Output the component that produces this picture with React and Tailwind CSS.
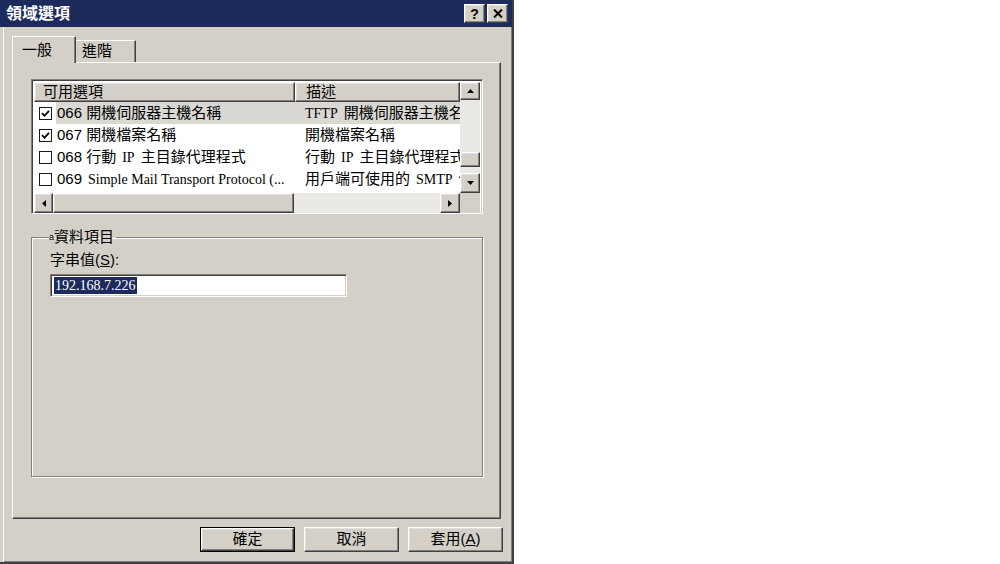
import React from "react";

const raised =
  "bg-[#d4d0c8] border border-t-white border-l-white border-r-[#404040] border-b-[#404040] shadow-[inset_-1px_-1px_0_#808080,inset_1px_1px_0_#dfdfdf]";

function Tri({ dir }) {
  const pts = {
    up: "0,4 7,4 3.5,0",
    down: "0,0 7,0 3.5,4",
    left: "4,0 4,7 0,3.5",
    right: "0,0 0,7 4,3.5",
  }[dir];
  const w = dir === "up" || dir === "down" ? 7 : 4;
  const h = dir === "up" || dir === "down" ? 4 : 7;
  return (
    <svg width={w} height={h} viewBox={`0 0 ${w} ${h}`}>
      <polygon points={pts} fill="#000" />
    </svg>
  );
}

function ArrowBtn({ dir, className }) {
  return (
    <div className={`${raised} flex items-center justify-center ${className}`}>
      <Tri dir={dir} />
    </div>
  );
}

function Check({ on }) {
  return (
    <div className="w-[13px] h-[13px] shrink-0 bg-white border border-[#1a1a1a] flex items-center justify-center">
      {on && (
        <svg width="9" height="9" viewBox="0 0 9 9">
          <path d="M1 4.2 L3.5 6.8 L8 1.8" stroke="#000" strokeWidth="1.8" fill="none" />
        </svg>
      )}
    </div>
  );
}

const S = ({ children, l, r }) => (
  <span
    className={`font-['Liberation_Serif',serif] text-[14px] ${l ? "ml-[6px]" : ""} ${r ? "mr-[6px]" : ""}`}
  >
    {children}
  </span>
);

const rows = [
  { on: true, sel: true, a: <>066 開機伺服器主機名稱</>, b: <><S r>TFTP</S>開機伺服器主機名稱</> },
  { on: true, a: <>067 開機檔案名稱</>, b: <>開機檔案名稱</> },
  { on: false, a: <>068 行動<S l r>IP</S>主目錄代理程式</>, b: <>行動<S l r>IP</S>主目錄代理程式</> },
  { on: false, a: <>069<S l>Simple Mail Transport Protocol (...</S></>, b: <>用戶端可使用的<S l r>SMTP</S>伺服器清單</> },
  { on: false, a: <>070 郵局通訊協定 (POP3) 伺服器</>, b: <>用戶端可使用的<S l r>POP3</S>伺服器清單</> },
];

export default function App() {
  return (
    <div className="w-[1000px] h-[564px] bg-white flex font-['Liberation_Sans','Noto_Sans_CJK_TC',sans-serif] text-black">
      <div className="w-[514px] h-[564px] bg-[#d4d0c8] flex flex-col border-r-2 border-r-[#404040] border-b-2 border-b-[#404040] shadow-[inset_3px_0_0_#d4d0c8,inset_4px_0_0_#ffffff,inset_-1px_-1px_0_#808080]">
        {/* title bar */}
        <div className="h-[27px] shrink-0 bg-[#1c2b5c] flex items-center justify-between pl-[6px] pr-[4px]">
          <span className="text-white font-bold text-[16px] leading-none">領域選項</span>
          <div className="flex gap-[2px]">
            <div className={`${raised} w-[21px] h-[19px] flex items-center justify-center text-[14px] font-bold leading-none`}>?</div>
            <div className={`${raised} w-[21px] h-[19px] flex items-center justify-center`}>
              <svg width="10" height="9" viewBox="0 0 10 9">
                <path d="M1 0.5 L9 8.5 M9 0.5 L1 8.5" stroke="#000" strokeWidth="2" />
              </svg>
            </div>
          </div>
        </div>

        <div className="flex-1 flex flex-col pl-[12px] pr-[11px]">
          {/* tabs */}
          <div className="flex items-end h-[26px] mt-[9px] relative z-10">
            <div className="w-[64px] h-[27px] bg-[#d4d0c8] border-t border-l border-t-white border-l-white border-r border-r-[#404040] shadow-[inset_-1px_0_0_#808080] flex items-center pl-[9px] text-[15px] -mb-[1px]">
              一般
            </div>
            <div className="w-[60px] h-[22px] bg-[#d4d0c8] border-t border-t-white border-r border-r-[#404040] shadow-[inset_-1px_0_0_#808080] flex items-center pl-[6px] text-[15px]">
              進階
            </div>
          </div>

          {/* panel */}
          <div className="h-[457px] border border-t-white border-l-white border-r-[#404040] border-b-[#404040] shadow-[inset_-1px_-1px_0_#808080] pl-[18px] pr-[17px] pt-[16px] flex flex-col">
            {/* list view */}
            <div className="h-[135px] border border-t-[#808080] border-l-[#808080] border-r-white border-b-white shadow-[inset_1px_1px_0_#404040,inset_-1px_-1px_0_#d4d0c8] p-[2px] flex flex-col bg-white">
              <div className="flex h-[111px]">
                <div className="flex-1 flex flex-col overflow-hidden">
                  <div className="flex h-[20px] shrink-0 text-[15px]">
                    <div className={`${raised} w-[261px] shrink-0 flex items-center pl-[8px]`}>可用選項</div>
                    <div className={`${raised} flex-1 flex items-center pl-[10px]`}>描述</div>
                  </div>
                  {rows.map((r, i) => (
                    <div key={i} className="flex h-[22px] shrink-0 items-center text-[15px] whitespace-nowrap">
                      <div className="w-[261px] shrink-0 flex items-center pl-[5px] h-full">
                        <Check on={r.on} />
                        <div className={`ml-[4px] h-full flex-1 flex items-center pl-[1px] overflow-hidden ${r.sel ? "bg-[#dad8d3]" : ""}`}>
                          {r.a}
                        </div>
                      </div>
                      <div className={`flex-1 h-full flex items-center pl-[10px] overflow-hidden ${r.sel ? "bg-[#dad8d3]" : ""}`}>
                        {r.b}
                      </div>
                    </div>
                  ))}
                </div>
                {/* vertical scrollbar */}
                <div className="w-[20px] shrink-0 flex flex-col bg-[#ebe9e5]">
                  <ArrowBtn dir="up" className="h-[18px] shrink-0" />
                  <div className="h-[52px] shrink-0" />
                  <div className={`${raised} h-[15px] shrink-0`} />
                  <div className="flex-1" />
                  <ArrowBtn dir="down" className="h-[20px] shrink-0" />
                </div>
              </div>
              {/* horizontal scrollbar */}
              <div className="flex h-[20px] shrink-0">
                <div className="flex-1 flex bg-[#ebe9e5]">
                  <ArrowBtn dir="left" className="w-[19px] shrink-0" />
                  <div className={`${raised} w-[241px] shrink-0`} />
                  <div className="flex-1" />
                  <ArrowBtn dir="right" className="w-[20px] shrink-0" />
                </div>
                <div className="w-[20px] shrink-0 bg-[#d4d0c8]" />
              </div>
            </div>

            {/* group box */}
            <fieldset className="mt-[15px] h-[248px] border border-[#808080] shadow-[inset_1px_1px_0_#ffffff,1px_1px_0_#ffffff] pl-[18px] pr-[10px]">
              <legend className="ml-[-1px] pr-[2px] text-[15px] leading-[16px]">
                <span className="text-[9px] align-top">a</span>資料項目
              </legend>
              <div className="mt-[6px] text-[15px] leading-[17px]">
                字串值(<span className="underline">S</span>):
              </div>
              <div className="mt-[6px] w-[297px] h-[23px] bg-white border border-t-[#808080] border-l-[#808080] border-r-white border-b-white shadow-[inset_1px_1px_0_#404040,inset_-1px_-1px_0_#d4d0c8] flex items-center pl-[3px]">
                <span className="bg-[#1c2b5c] text-white font-['Liberation_Serif',serif] text-[14px] leading-[17px] px-[1px]">
                  192.168.7.226
                </span>
              </div>
            </fieldset>
          </div>

          {/* buttons */}
          <div className="flex justify-end gap-[9px] mt-[8px] -mr-[2px]">
            <div className="border border-black">
              <div className={`${raised} w-[93px] h-[23px] flex items-center justify-center text-[15px]`}>確定</div>
            </div>
            <div className={`${raised} w-[95px] h-[25px] flex items-center justify-center text-[15px]`}>取消</div>
            <div className={`${raised} w-[95px] h-[25px] flex items-center justify-center text-[15px]`}>
              套用(<span className="underline">A</span>)
            </div>
          </div>
        </div>
      </div>
    </div>
  );
}
